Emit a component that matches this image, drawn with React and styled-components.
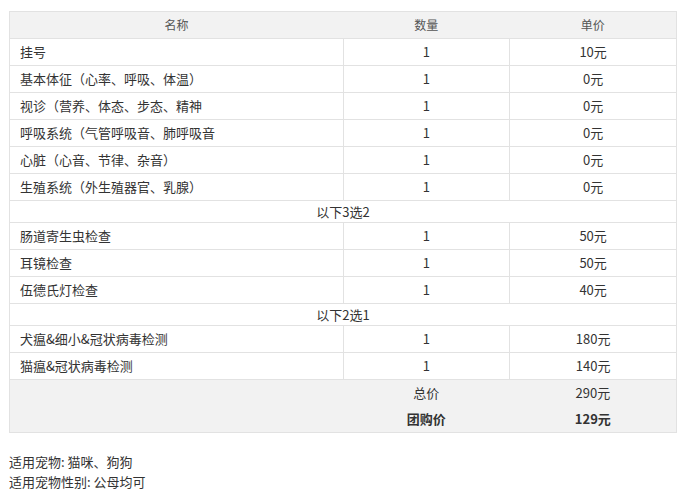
import styled, { createGlobalStyle } from 'styled-components';

const GlobalStyle = createGlobalStyle`
  body {
    margin: 0;
    background: #ffffff;
    font-family: "Noto Sans CJK SC", "Liberation Sans", sans-serif;
    color: #333333;
  }
`;

const Page = styled.div`
  padding: 11px 4px 0 9px;
`;

const Table = styled.table`
  width: 668px;
  border-collapse: collapse;
  table-layout: fixed;
  font-size: 13px;
  line-height: 18px;
  color: #333333;
  border: 1px solid #e2e2e2;
`;

const HeadCell = styled.th`
  height: 26px;
  padding: 0;
  background: #f2f2f2;
  font-size: 12px;
  font-weight: normal;
  color: #555555;
  text-align: center;
  border-bottom: 1px solid #e2e2e2;
`;

const Cell = styled.td`
  height: 26px;
  padding: 0 10px;
  text-align: ${(p) => (p.$left ? 'left' : 'center')};
  border: 1px solid #e2e2e2;
  white-space: nowrap;
  overflow: hidden;
`;

const GroupCell = styled.td`
  height: 21px;
  padding: 0;
  text-align: center;
  border: 1px solid #e2e2e2;
`;

const FootCell = styled.td`
  height: 26px;
  padding: 0;
  text-align: center;
  background: #f2f2f2;
  font-weight: ${(p) => (p.$bold ? 'bold' : 'normal')};
`;

const Notes = styled.div`
  margin-top: 19px;
  font-size: 13px;
  line-height: 20px;
  color: #333333;
`;

const basic = [
  ['挂号', 1, '10元'],
  ['基本体征（心率、呼吸、体温）', 1, '0元'],
  ['视诊（营养、体态、步态、精神', 1, '0元'],
  ['呼吸系统（气管呼吸音、肺呼吸音', 1, '0元'],
  ['心脏（心音、节律、杂音）', 1, '0元'],
  ['生殖系统（外生殖器官、乳腺）', 1, '0元'],
];

const groups = [
  {
    title: '以下3选2',
    items: [
      ['肠道寄生虫检查', 1, '50元'],
      ['耳镜检查', 1, '50元'],
      ['伍德氏灯检查', 1, '40元'],
    ],
  },
  {
    title: '以下2选1',
    items: [
      ['犬瘟&细小&冠状病毒检测', 1, '180元'],
      ['猫瘟&冠状病毒检测', 1, '140元'],
    ],
  },
];

function Row({ item }) {
  return (
    <tr>
      <Cell $left>{item[0]}</Cell>
      <Cell>{item[1]}</Cell>
      <Cell>{item[2]}</Cell>
    </tr>
  );
}

export default function App() {
  const bodyRows = [];
  basic.forEach((it) => bodyRows.push(<Row key={it[0]} item={it} />));
  groups.forEach((g) => {
    bodyRows.push(
      <tr key={g.title}>
        <GroupCell colSpan={3}>{g.title}</GroupCell>
      </tr>
    );
    g.items.forEach((it) => bodyRows.push(<Row key={it[0]} item={it} />));
  });

  return (
    <>
      <GlobalStyle />
      <Page>
        <Table>
          <colgroup>
            <col style={{ width: '50%' }} />
            <col style={{ width: '25%' }} />
            <col style={{ width: '25%' }} />
          </colgroup>
          <thead>
            <tr>
              <HeadCell>名称</HeadCell>
              <HeadCell>数量</HeadCell>
              <HeadCell>单价</HeadCell>
            </tr>
          </thead>
          <tbody>{bodyRows}</tbody>
          <tfoot>
            <tr>
              <FootCell />
              <FootCell>总价</FootCell>
              <FootCell>290元</FootCell>
            </tr>
            <tr>
              <FootCell />
              <FootCell $bold>团购价</FootCell>
              <FootCell $bold>129元</FootCell>
            </tr>
          </tfoot>
        </Table>
        <Notes>
          <div>适用宠物: 猫咪、狗狗</div>
          <div>适用宠物性别: 公母均可</div>
        </Notes>
      </Page>
    </>
  );
}
